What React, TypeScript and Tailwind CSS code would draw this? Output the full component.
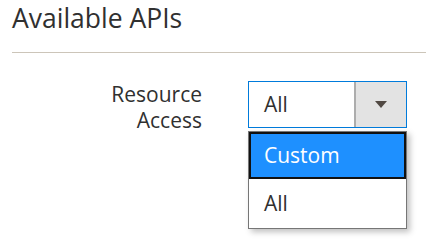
export default function App() {
  return (
    <div className="w-[426px] h-[241px] bg-white overflow-hidden" style={{ fontFamily: '"Open Sans", sans-serif' }}>
      {/* Section title */}
      <div className="pl-3 pt-[2px]">
        <h2 className="text-[26.5px] leading-[32px] text-[#303030] font-normal">Available APIs</h2>
        <div className="mt-[18px] h-px bg-[#ccc5b9]" />
      </div>

      {/* Form row */}
      <div className="flex pt-[28px]">
        <label className="w-[202px] text-right text-[21px] leading-[26px] text-[#303030]">
          Resource
          <br />
          Access
        </label>
        <div className="relative ml-[46px] w-[159px]">
          <div className="flex h-[47px] border border-[#007bdb] bg-white">
            <span className="flex-1 pl-[15px] text-[21px] leading-[45px] text-[#303030]">All</span>
            <span className="flex w-[52px] items-center justify-center border-l-2 border-[#adadad] bg-[#e3e3e3]">
              <svg width="12" height="7" viewBox="0 0 12 7">
                <path d="M0 0H12L6 7Z" fill="#514943" />
              </svg>
            </span>
          </div>
          {/* Open list */}
          <div className="absolute left-0 top-[50px] w-[159px] border border-[#767676] bg-white shadow-[3px_3px_6px_rgba(0,0,0,0.25)]">
            <div className="h-[47px] border-2 border-[#111] bg-[#1e90ff] pl-[13px] text-[21px] leading-[43px] text-white">Custom</div>
            <div className="h-[49px] pl-[15px] text-[21px] leading-[49px] text-[#303030]">All</div>
          </div>
        </div>
      </div>
    </div>
  )
}
